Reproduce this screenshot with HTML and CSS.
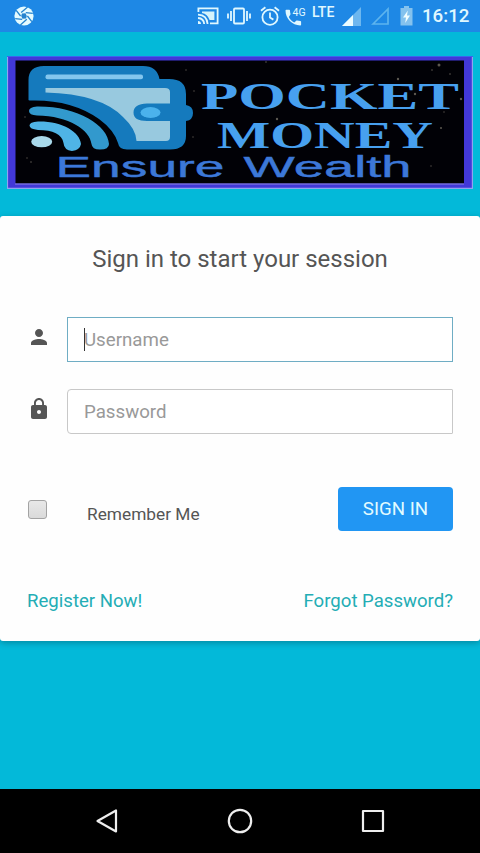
FILE: index.html
```
<!DOCTYPE html>
<html lang="en">
<head>
    <meta charset="UTF-8">
    <meta name="viewport" content="width=device-width, initial-scale=1">
    <title>Sign In | Pocket Money</title>
    <link rel="stylesheet" href="styles.css">
</head>
<body>
    <div class="status-bar">
        <svg class="app-icon" width="20" height="20" viewBox="0 0 20 20">
            <circle cx="10" cy="10" r="9.6" fill="#e4fbff"/>
            <path d="M7.2 6.6 13.6 1M11.8 6.6 18.8 7.4M13.4 10 17.8 15.6M12.8 13.2 6.4 19M8.2 13.4 1.2 12.6M6.6 10 2.2 4.4" stroke="#2584cf" stroke-width="1.3"/>
            <path d="M8 7.600 11.500 7.200 12.800 10 12 12.600 8.500 12.800 7.200 10z" fill="#2584cf"/>
        </svg>
        <div class="status-icons">
            <svg class="cast" width="22" height="20" viewBox="0 0 22 20" fill="none" stroke="#e0f8ff" stroke-width="1.8">
                <path d="M1.400 6V2.400H20.600V17.400H13"/>
                <path d="M5 5.600H17.400V14H12.600Q10.500 8 5 7z" fill="#d5f3fb" stroke="none"/>
                <path d="M1 8.600Q10 9 10.600 18M1 12Q6.800 12.400 7.200 18"/>
                <path d="M1 15Q3.800 15.200 4 18H1z" fill="#e0f8ff" stroke="none"/>
            </svg>
            <svg class="vibrate" width="24" height="18" viewBox="0 0 24 18" fill="none" stroke="#e0f8ff" stroke-width="1.8">
                <rect x="7" y="1.5" width="10" height="15" rx="1"/>
                <path d="M4 4V14M20 4V14M1 6.5V11.5M23 6.5V11.5"/>
            </svg>
            <svg class="alarm" width="20" height="20" viewBox="0 0 20 20" fill="none" stroke="#e0f8ff" stroke-width="1.8">
                <circle cx="10" cy="11.2" r="7.6"/>
                <path d="M10 6.6V11.6L13.4 13.6M1 4.8 5.4 1.2M19 4.8 14.6 1.2"/>
            </svg>
            <svg class="call" width="22" height="20" viewBox="0 0 22 20">
                <path transform="translate(-1.500 2.500)" d="M5.300 8.500c1.200 2.400 3.100 4.300 5.500 5.500l1.900-1.800c.2-.2.6-.3.9-.2 1 .3 2.100.5 3.200.5.5 0 .8.4.8.8v2.900c0 .5-.4.8-.8.8C8.700 17 2 10.300 2 2.100c0-.5.4-.8.8-.8h2.900c.5 0 .8.4.8.8 0 1.100.2 2.200.5 3.200.1.3 0 .6-.2.9z" fill="#e0f8ff"/>
                <text class="net" x="7.500" y="10">4G</text>
            </svg>
            <span class="lte">LTE</span>
            <svg class="signal" width="19" height="19" viewBox="0 0 19 19">
                <path d="M0 19 19 0V19z" fill="#6db7ef"/>
                <path d="M0 19 11 8V19z" fill="#eafcff"/>
            </svg>
            <svg class="signal-empty" width="18" height="18" viewBox="0 0 18 18">
                <path d="M2 17 17 2V17z" fill="none" stroke="#5db4ee" stroke-width="1.700"/>
            </svg>
            <svg class="battery" width="13" height="20" viewBox="0 0 13 20">
                <path d="M4 0H9V2H12.500V19.500H.5V2H4z" fill="#84c2ee"/>
                <path d="M7.800 4.500 3 11.500H6L5.200 17 10 9.500H7z" fill="#f0fdff"/>
            </svg>
            <span class="clock">16:12</span>
        </div>
    </div>

    <div class="login-page">
        <div class="logo">
            <svg width="466" height="133" viewBox="0 0 466 133">
                <rect width="466" height="133" fill="#4238d8"/>
                <path d="M0 .5H466" stroke="#3b62ee"/>
                <path d="M.5 1V132.300H465.400V1" fill="none" stroke="#91a2f0" stroke-width="1.200"/>
                <rect x="8.500" y="4.500" width="448.500" height="123" fill="#010106"/>
                <path d="M8 128H457" stroke="#8b83e4" stroke-width="1.200"/>

                <!-- dust specks -->
                <g fill="#5c5850">
                    <circle cx="432" cy="9" r="1.500"/>
                    <circle cx="425" cy="14" r=".8"/>
                    <circle cx="443" cy="18" r=".8"/>
                    <circle cx="391" cy="23" r="1.200"/>
                    <circle cx="408" cy="38" r="1.200"/>
                    <circle cx="454" cy="43" r="1.200"/>
                    <circle cx="270" cy="63" r="1.200"/>
                    <circle cx="434" cy="72" r="1"/>
                    <circle cx="437" cy="56" r=".7"/>
                    <circle cx="259" cy="6" r=".8"/>
                    <circle cx="179" cy="14" r=".7"/>
                    <circle cx="187" cy="35" r=".7"/>
                    <circle cx="18" cy="61" r=".7"/>
                    <circle cx="20" cy="102" r=".7"/>
                    <circle cx="24" cy="106" r=".8"/>
                    <circle cx="186" cy="81" r=".7"/>
                    <circle cx="424" cy="110" r=".7"/>
                </g>

                <!-- wallet -->
                <path d="M21.500 44V24Q21.500 10 37 10H136Q150 10 152.500 23H162Q179 23 179 38V49Q186 50 186 57Q186 64 179 65V80Q179 93.500 163 93.500H120Q112 93.500 111 87Q107 74 92 63Q65 44 26 44.500Q21.500 44.500 21.500 44z" fill="#157abd"/>
                <rect x="38.500" y="18.500" width="97.500" height="4.800" rx="2" fill="#83c6ee"/>
                <path d="M38.500 32H158Q163 32 163 36V47.500H140Q126.500 48 126.500 56.500Q126.500 65 140 65H163V81Q163 85 159 85H129.500Q129 73 116 61Q94 38 38.500 36.500z" fill="#98c9df"/>
                <ellipse cx="143.500" cy="56.500" rx="10" ry="5.400" fill="#4bb2ec"/>

                <!-- signal waves -->
                <path d="M30 50.500C70 50 101 69 102 88Q102 93.500 93 93.500Q85 93.500 84.500 88C83 74 62 60 30 59.500Q22 59 22 55Q22 51 30 50.500z" fill="#3299cd"/>
                <path d="M31 65.500C55 65 73 76 74 88Q73 94 65 95Q57 94 56.500 87C55 78 46 74 31 74Q22.500 73 22.500 69.500Q22.500 66 31 65.500z" fill="#4fb4e6"/>
                <ellipse cx="34.700" cy="85.700" rx="10.500" ry="5.600" fill="#a9d9eb"/>

                <text class="brand" x="194" y="52.500" textLength="258" lengthAdjust="spacingAndGlyphs">POCKET</text>
                <text class="brand" x="210" y="91.500" textLength="216" lengthAdjust="spacingAndGlyphs">MONEY</text>
                <text class="slogan" x="48.500" y="120.500" textLength="169" lengthAdjust="spacingAndGlyphs">Ensure</text>
                <text class="slogan" x="236.500" y="120.500" textLength="168" lengthAdjust="spacingAndGlyphs">Wealth</text>
            </svg>
        </div>

        <form class="card">
            <div class="msg">Sign in to start your session</div>

            <div class="input-group">
                <svg class="input-icon" width="24" height="24" viewBox="0 0 24 24">
                    <path d="M12 12c2.210 0 4-1.790 4-4s-1.790-4-4-4-4 1.790-4 4 1.790 4 4 4zm0 2c-2.670 0-8 1.340-8 4v2h16v-2c0-2.660-5.330-4-8-4z"/>
                </svg>
                <div class="field">
                    <input type="text" class="focused" name="username" placeholder="Username">
                    <span class="caret"></span>
                </div>
            </div>

            <div class="input-group">
                <svg class="input-icon" width="24" height="24" viewBox="0 0 24 24">
                    <path d="M18 8h-1V6c0-2.760-2.240-5-5-5S7 3.240 7 6v2H6c-1.100 0-2 .9-2 2v10c0 1.100.9 2 2 2h12c1.100 0 2-.9 2-2V10c0-1.100-.9-2-2-2zm-6 9c-1.100 0-2-.9-2-2s.9-2 2-2 2 .9 2 2-.9 2-2 2zm3.100-9H8.900V6c0-1.710 1.390-3.100 3.100-3.100s3.100 1.390 3.100 3.100v2z"/>
                </svg>
                <div class="field">
                    <input type="password" name="password" placeholder="Password">
                </div>
            </div>

            <div class="actions">
                <input type="checkbox" id="rememberme" class="checkbox">
                <label for="rememberme">Remember Me</label>
                <button type="button" class="btn">SIGN IN</button>
            </div>

            <div class="links">
                <a href="#">Register Now!</a>
                <a href="#">Forgot Password?</a>
            </div>
        </form>
    </div>

    <div class="nav-bar">
        <svg width="26" height="26" viewBox="0 0 26 26"><path d="M3.500 13 22 2.500V23.500z"/></svg>
        <svg width="26" height="26" viewBox="0 0 26 26"><circle cx="13" cy="13" r="11.200"/></svg>
        <svg width="26" height="26" viewBox="0 0 26 26"><rect x="3" y="3" width="20" height="20"/></svg>
    </div>
</body>
</html>
```

FILE: styles.css
```
* {
    box-sizing: border-box;
}

body {
    margin: 0;
    height: 853px;
    display: flex;
    flex-direction: column;
    overflow: hidden;
    background-color: #03b9d9;
    font-family: Roboto, 'Liberation Sans', sans-serif;
    color: #555;
}

svg {
    display: block;
    flex-shrink: 0;
}

/* status bar */
.status-bar {
    height: 32px;
    padding: 0 11px 0 14px;
    display: flex;
    align-items: center;
    justify-content: space-between;
    background-color: #1e88e5;
    color: #e0f8ff;
}

.status-icons {
    display: flex;
    align-items: center;
}

.vibrate {
    margin-left: 8px;
}

.alarm {
    margin-left: 9px;
}

.call {
    margin-left: 5px;
}

.net {
    font-size: 10.5px;
    fill: #e0f8ff;
}

.lte {
    width: 24px;
    margin: 0 0 8px 5px;
    font-size: 14px;
    font-weight: 500;
    line-height: 16px;
}

.signal {
    margin-left: 6px;
}

.signal-empty {
    margin-left: 10px;
}

.battery {
    margin-left: 11px;
}

.clock {
    width: 47px;
    margin-left: 9px;
    font-size: 18.7px;
    font-weight: 500;
}

/* login */
.login-page {
    flex: 1;
    padding-top: 24px;
}

.logo {
    margin: 0 7px 27px;
}

.brand {
    font-family: 'Liberation Serif', serif;
    font-size: 37.5px;
    font-weight: bold;
    fill: #47a0ef;
}

.slogan {
    font-family: 'Liberation Sans', sans-serif;
    font-size: 30px;
    fill: #3c78d8;
    stroke: #3c78d8;
    stroke-width: 0.4;
}

.card {
    height: 425px;
    padding: 28px 27px 0;
    background-color: #fefefe;
    border-radius: 3px;
    box-shadow: 0 2px 6px rgba(0, 0, 0, 0.25);
}

.msg {
    margin-bottom: 43px;
    font-size: 24px;
    line-height: 30px;
    text-align: center;
}

.input-group {
    height: 45px;
    margin-bottom: 27px;
    display: flex;
    align-items: center;
}

.input-icon {
    width: 24px;
    height: 24px;
    margin: 0 16.5px 6px -0.5px;
    fill: #555;
}

.field {
    position: relative;
    flex: 1;
}

.field input {
    display: block;
    width: 100%;
    height: 45px;
    padding: 0 16px;
    border: 1px solid #c8c8c8;
    border-radius: 4px 1px 1px 4px;
    outline: none;
    background-color: #fff;
    font-family: inherit;
    font-size: 18.7px;
}

.field input.focused {
    border-color: #6fadc4;
    border-radius: 0;
}

.field input::placeholder {
    color: #999;
}

.caret {
    position: absolute;
    left: 17px;
    top: 11px;
    width: 1px;
    height: 23px;
    background-color: #333;
}

.actions {
    margin-top: 53px;
    display: flex;
    align-items: center;
}

.checkbox {
    appearance: none;
    width: 19px;
    height: 19px;
    margin: 0 40px 0 1px;
    border: 1px solid #a3a3a3;
    border-radius: 3px;
    background: linear-gradient(#e8e8e8, #dadada);
}

.actions label {
    padding-top: 10px;
    font-size: 17.3px;
}

.btn {
    width: 115px;
    height: 44px;
    margin-left: auto;
    padding: 0;
    border: none;
    border-radius: 4px;
    background-color: #2196f3;
    color: #e2fbff;
    font-family: inherit;
    font-size: 18.7px;
}

.links {
    margin-top: 59px;
    display: flex;
    justify-content: space-between;
    font-size: 18.6px;
    line-height: 22px;
}

.links a {
    color: #24adb5;
    text-decoration: none;
}

/* navigation bar */
.nav-bar {
    height: 64px;
    padding: 0 94px;
    display: flex;
    align-items: center;
    justify-content: space-between;
    background-color: #000;
}

.nav-bar svg {
    fill: none;
    stroke: #eee;
    stroke-width: 2.2;
    stroke-linejoin: round;
}
```
